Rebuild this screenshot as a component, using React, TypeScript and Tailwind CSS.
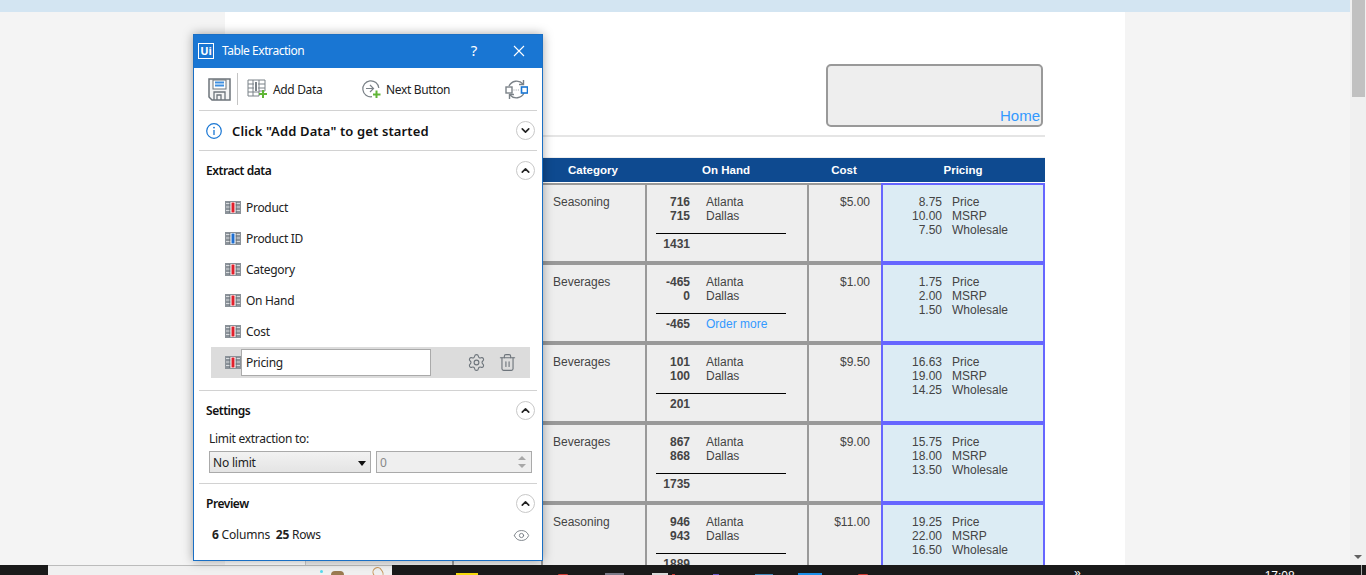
import React from 'react';
import { ChevronUp, ChevronDown, Settings, Trash2, Eye } from 'lucide-react';

const rows = [
  { category: 'Seasoning', a: '716', d: '715', total: '1431', cost: '$5.00', price: ['8.75', '10.00', '7.50'] },
  { category: 'Beverages', a: '-465', d: '0', total: '-465', order: true, cost: '$1.00', price: ['1.75', '2.00', '1.50'] },
  { category: 'Beverages', a: '101', d: '100', total: '201', cost: '$9.50', price: ['16.63', '19.00', '14.25'] },
  { category: 'Beverages', a: '867', d: '868', total: '1735', cost: '$9.00', price: ['15.75', '18.00', '13.50'] },
  { category: 'Seasoning', a: '946', d: '943', total: '1889', cost: '$11.00', price: ['19.25', '22.00', '16.50'] },
];

const fields: [string, string][] = [
  ['Product', '#e0202c'],
  ['Product ID', '#1f6fd0'],
  ['Category', '#e0202c'],
  ['On Hand', '#e0202c'],
  ['Cost', '#e0202c'],
];

const priceLabels = ['Price', 'MSRP', 'Wholesale'];

// small table glyph used next to each extracted column
const ColumnIcon = ({ color = '#e0202c' }: { color?: string }) => (
  <svg width="16" height="13" viewBox="0 0 16 13" className="shrink-0">
    <rect x="0" y="0" width="16" height="13" fill="#8b9299" />
    {[2.5, 6, 9.5].map((y) => (
      <path key={y} d={`M1 ${y}H15`} stroke="#d8dbde" strokeWidth="1" />
    ))}
    <path d="M5 1V12M11 1V12" stroke="#5f666d" strokeWidth="1" />
    <rect x="5.500" y="1" width="5" height="11" fill="#fff" />
    <rect x="6.500" y="1.500" width="3" height="10" fill={color} />
  </svg>
);

const SectionToggle = ({ open = true }: { open?: boolean }) => (
  <span className="flex h-[19px] w-[19px] items-center justify-center rounded-full border border-[#c8c8c8] bg-white text-[#222]">
    {open ? <ChevronUp size={13} strokeWidth={3} /> : <ChevronDown size={13} strokeWidth={3} />}
  </span>
);

const SectionHeader = ({ title }: { title: string }) => (
  <div className="flex items-center justify-between pl-[12px] pr-[7px]">
    <span className="text-[12px] font-semibold tracking-[-0.45px] text-[#111]">{title}</span>
    <SectionToggle />
  </div>
);

const Divider = () => <div className="mx-[5px] h-px bg-[#d2d2d2]" />;

const ExtractionPanel = () => (
  <div className="absolute left-[193px] top-[34px] flex h-[527px] w-[350px] flex-col border border-[#1a6fc4] bg-white font-['Noto_Sans',sans-serif] text-[#222] shadow-[0_0_10px_rgba(0,0,0,0.35)]">
    {/* title bar */}
    <div className="flex h-[33px] items-center bg-[#1976d3] pb-[2px] text-white">
      <span className="ml-[4px] flex h-[16px] w-[16px] items-center justify-center border border-white text-[11px] font-bold leading-none">Ui</span>
      <span className="ml-[8px] w-[160px] text-[12px] tracking-[-0.45px]">Table Extraction</span>
      <span className="ml-[87px] w-[10px] text-center text-[15px]">?</span>
      <svg width="12" height="12" viewBox="0 0 12 12" className="ml-[34px]">
        <path d="M1 1L11 11M11 1L1 11" stroke="#fff" strokeWidth="1.1" />
      </svg>
    </div>

    {/* toolbar */}
    <div className="flex h-[42px] items-center pl-[14px]">
      <svg width="23" height="23" viewBox="0 0 23 23" className="shrink-0">
        <path d="M1 1H22V22H4L1 19Z" fill="#f4f4f4" stroke="#6d747b" strokeWidth="1.5" />
        <rect x="5" y="2" width="13" height="9" fill="#fff" stroke="#6d747b" />
        <path d="M7 4.500H16M7 7.500H16" stroke="#3f8fe0" strokeWidth="2" />
        <path d="M6 22V14H17V22M9 22V17H13V22" fill="none" stroke="#6d747b" strokeWidth="1.3" />
      </svg>
      <div className="ml-[6px] h-[32px] w-px bg-[#c4c4c4]" />
      <svg width="21" height="20" viewBox="0 0 21 20" className="ml-[9px] shrink-0">
        <path d="M1 1H18V12H12V17H1Z" fill="#fff" stroke="#7b8288" />
        <path d="M6 1V17M12 1V12M1 5H18M1 9H18M1 13H12" stroke="#7b8288" />
        <rect x="7" y="2" width="4" height="10" fill="#fff" />
        <rect x="8" y="3" width="2" height="9" fill="#7b8288" />
        <path d="M16 11V19M12 15H20" stroke="#5fb536" strokeWidth="2" />
      </svg>
      <span className="ml-[5px] w-[88px] pt-[2px] text-[12px] tracking-[-0.35px]">Add Data</span>
      <svg width="20" height="20" viewBox="0 0 20 20" className="shrink-0">
        <path d="M11 17.700A8 8 0 1 1 17.800 9" fill="none" stroke="#7b8288" strokeWidth="1.2" />
        <path d="M5 9.500H12M9 6L12.500 9.500L9 13" fill="none" stroke="#7b8288" strokeWidth="1.2" />
        <path d="M15.500 11.500V19M12 15.500H19.500" stroke="#5fb536" strokeWidth="2" />
      </svg>
      <span className="ml-[5px] w-[119px] pt-[2px] text-[12px] tracking-[-0.35px]">Next Button</span>
      <svg width="23" height="21" viewBox="0 0 23 21" className="shrink-0">
        <path d="M4 7A8.500 8.500 0 0 1 18 5" fill="none" stroke="#7b8288" strokeWidth="1.4" />
        <path d="M18.500 1V5.500H14" fill="none" stroke="#7b8288" strokeWidth="1.4" />
        <path d="M19 14A8.500 8.500 0 0 1 5 16" fill="none" stroke="#7b8288" strokeWidth="1.4" />
        <path d="M4.500 20V15.500H9" fill="none" stroke="#7b8288" strokeWidth="1.4" />
        <rect x="1" y="8" width="6" height="6" fill="#fff" stroke="#7b8288" strokeWidth="1.4" />
        <rect x="16.500" y="8" width="6" height="6" fill="#fff" stroke="#1976d3" strokeWidth="1.6" />
        <path d="M8.500 11H15" stroke="#9aa0a6" strokeDasharray="1 1.200" />
      </svg>
    </div>
    <Divider />

    {/* status */}
    <div className="flex h-[39px] items-center pl-[12px] pr-[7px]">
      <svg width="16" height="16" viewBox="0 0 16 16" className="shrink-0">
        <circle cx="8" cy="8" r="7.300" fill="none" stroke="#1976d3" strokeWidth="1.200" />
        <path d="M8 7V12" stroke="#1976d3" strokeWidth="1.300" />
        <circle cx="8" cy="4.600" r="0.900" fill="#1976d3" />
      </svg>
      <span className="ml-[10px] flex-1 pt-[2px] text-[13px] font-semibold tracking-[0.13px] text-[#111]">Click "Add Data" to get started</span>
      <SectionToggle open={false} />
    </div>
    <Divider />

    {/* extract data */}
    <div className="pt-[10px]">
      <SectionHeader title="Extract data" />
      <div className="mt-[12px] flex flex-col">
        {fields.map(([name, color]) => (
          <div key={name} className="flex h-[31px] items-center pl-[31px]">
            <ColumnIcon color={color} />
            <span className="ml-[5px] text-[12px] tracking-[-0.3px]">{name}</span>
          </div>
        ))}
        <div className="ml-[17px] mr-[12px] flex h-[31px] items-center bg-[#dcdcdc] pl-[14px]">
          <ColumnIcon />
          <div className="flex h-[27px] w-[190px] items-center border border-[#aaaaaa] bg-white pl-[4px] text-[12px] tracking-[-0.3px]">Pricing</div>
          <Settings size={19} strokeWidth={1.4} className="ml-[36px] text-[#6d747b]" />
          <Trash2 size={19} strokeWidth={1.4} className="ml-[12px] text-[#6d747b]" />
        </div>
      </div>
    </div>
    <div className="h-[12px]" />
    <Divider />

    {/* settings */}
    <div className="pt-[10px]">
      <SectionHeader title="Settings" />
      <div className="mt-[11px] pl-[15px] text-[12px] leading-[16px] tracking-[-0.28px]">Limit extraction to:</div>
      <div className="ml-[15px] mt-[4px] flex gap-[5px]">
        <div className="flex h-[22px] w-[162px] items-center justify-between border border-[#aaaaaa] bg-gradient-to-b from-[#f2f2f2] to-[#e4e4e4] pl-[3px] pr-[4px] pt-[2px] text-[12px] tracking-[-0.2px]">
          No limit
          <span className="h-0 w-0 border-x-[4px] border-t-[5px] border-x-transparent border-t-[#111]" />
        </div>
        <div className="flex h-[22px] w-[156px] items-center justify-between border border-[#aaaaaa] bg-[#efefef] pl-[3px] pr-[5px] pt-[2px] text-[12px] text-[#888]">
          0
          <span className="flex flex-col gap-[4px] pb-[2px]">
            <span className="h-0 w-0 border-x-[4px] border-b-[4px] border-x-transparent border-b-[#a8a8a8]" />
            <span className="h-0 w-0 border-x-[4px] border-t-[4px] border-x-transparent border-t-[#a8a8a8]" />
          </span>
        </div>
      </div>
    </div>
    <div className="h-[10px]" />
    <Divider />

    {/* preview */}
    <div className="pt-[10px]">
      <SectionHeader title="Preview" />
      <div className="mt-[13px] flex items-center justify-between pl-[18px] pr-[12px] text-[12px] tracking-[-0.2px]">
        <span>
          <b className="font-bold">6</b> Columns&nbsp;&nbsp;<b className="font-bold">25</b> Rows
        </span>
        <Eye size={17} strokeWidth={1.2} className="text-[#6d747b]" />
      </div>
    </div>
  </div>
);

const TableRow = ({ row }: { row: (typeof rows)[number] }) => (
  <div className="grid h-[80px] grid-cols-[147px_89px_104px_162px_74px_164px] text-[12px] leading-[14px] text-[#444]">
    <div className="border-y-2 border-l border-[#cccccc] bg-[#eeeeee]" />
    <div className="border-y-2 border-l-2 border-[#999999] bg-[#eeeeee]" />
    <div className="border-y-2 border-l-2 border-[#999999] bg-[#eeeeee] pl-[10px] pt-[10px]">{row.category}</div>
    <div className="border-y-2 border-l-2 border-[#999999] bg-[#eeeeee] pl-[9px] pt-[10px]">
      <div className="grid grid-cols-[34px_1fr] gap-x-[16px]">
        <span className="text-right font-bold">{row.a}</span>
        <span>Atlanta</span>
        <span className="text-right font-bold">{row.d}</span>
        <span>Dallas</span>
      </div>
      <div className="mt-[10px] h-px w-[130px] bg-black" />
      <div className="mt-[3px] grid grid-cols-[34px_1fr] gap-x-[16px]">
        <span className="text-right font-bold">{row.total}</span>
        {row.order && <span className="text-[#3399ff]">Order more</span>}
      </div>
    </div>
    <div className="border-y-2 border-l-2 border-[#999999] bg-[#eeeeee] pr-[11px] pt-[10px] text-right">{row.cost}</div>
    <div className="border-2 border-[#6666ff] bg-[#dcecf4] pt-[10px]">
      {row.price.map((p, i) => (
        <div key={priceLabels[i]} className="grid grid-cols-[59px_1fr] gap-x-[10px]">
          <span className="text-right">{p}</span>
          <span>{priceLabels[i]}</span>
        </div>
      ))}
    </div>
  </div>
);

const Taskbar = () => (
  <div className="flex h-[10px] items-end overflow-hidden bg-[#1a1a1a]">
    <div className="ml-[48px] h-[10px] w-[344px] border-t border-[#bbbbbb] bg-[#f0f0f0]">
      <div className="relative h-full">
        <span className="absolute left-[272px] top-[4px] h-[3px] w-[3px] rounded-full bg-[#55d8ee]" />
        <span className="absolute left-[283px] top-[5px] h-[8px] w-[13px] rounded-full bg-[#9a7a50]" />
        <span className="absolute left-[325px] top-[1px] h-[12px] w-[10px] rotate-[-30deg] rounded-full border border-[#c9985e]" />
      </div>
    </div>
    <span className="ml-[64px] h-[2px] w-[22px] bg-[#f5d90a]" />
    <span className="ml-[80px] h-[1px] w-[10px] rounded-t-full bg-[#d03a32]" />
    <span className="ml-[37px] h-[2px] w-[19px] bg-[#7a7a88]" />
    <span className="ml-[28px] h-[2px] w-[16px] bg-[#d8d8d8]" />
    <span className="ml-[4px] h-[1px] w-[3px] bg-[#d03a32]" />
    <span className="ml-[38px] h-[1px] w-[6px] bg-[#6a5ac8]" />
    <span className="ml-[36px] h-[1px] w-[18px] bg-[#3f86b8]" />
    <span className="ml-[25px] h-[2px] w-[24px] bg-[#1c8fe8]" />
    <span className="ml-[36px] h-[1px] w-[10px] rounded-t-full bg-[#d03a32]" />
    <span className="ml-[206px] self-start pt-[2px] text-[12px] leading-[12px] text-white">»</span>
    <span className="ml-[184px] self-start pt-[5px] font-['Liberation_Sans',sans-serif] text-[12px] leading-[12px] text-white">17:08</span>
    <span className="ml-[66px] h-[10px] w-px bg-[#aaaaaa]" />
  </div>
);

export default function App() {
  return (
    <div className="relative flex h-[575px] flex-col overflow-hidden bg-white font-['Liberation_Sans',Arial,sans-serif]">
      <div className="flex h-[565px]">
        <div className="flex min-w-0 flex-1 flex-col">
          <div className="h-[12px] shrink-0 bg-[#d3e5f2]" />
          <div className="flex min-h-0 flex-1">
            <div className="w-[225px] bg-[#f4f4f4]" />
            <div className="w-[900px] overflow-hidden bg-white pl-[80px]">
              <div className="w-[740px]">
                <div className="flex justify-end pr-[2px] pt-[52px]">
                  <div className="flex h-[63px] w-[217px] items-end justify-end rounded-[5px] border-2 border-[#999999] bg-[#eeeeee] pr-px text-[15px] leading-[18px] text-[#3399ff]">Home</div>
                </div>
                <div className="mt-[8px] h-[2px] bg-[#e5e5e5]" />
                <div className="mt-[20px] border-t border-[#eeeeee]">
                  <div className="grid h-[24px] grid-cols-[147px_89px_104px_162px_74px_164px] items-center bg-[#0e4a90] pt-[1px] text-center text-[11.5px] font-bold text-white">
                    <span>Product</span>
                    <span>Product ID</span>
                    <span>Category</span>
                    <span>On Hand</span>
                    <span>Cost</span>
                    <span>Pricing</span>
                  </div>
                  <div className="mt-px">
                    {rows.map((row, i) => (
                      <TableRow key={i} row={row} />
                    ))}
                  </div>
                </div>
              </div>
            </div>
            <div className="flex-1 bg-[#f4f4f4]" />
          </div>
        </div>
        {/* scrollbar */}
        <div className="flex w-[16px] shrink-0 flex-col justify-between bg-[#f0f0f0] px-[1px] pb-[6px]">
          <div className="ml-px h-[97px] w-[13px] bg-[#c1c1c1]" />
          <span className="ml-[3px] h-0 w-0 border-x-[4px] border-t-[4px] border-x-transparent border-t-[#606060]" />
        </div>
      </div>
      <Taskbar />
      <ExtractionPanel />
    </div>
  );
}
